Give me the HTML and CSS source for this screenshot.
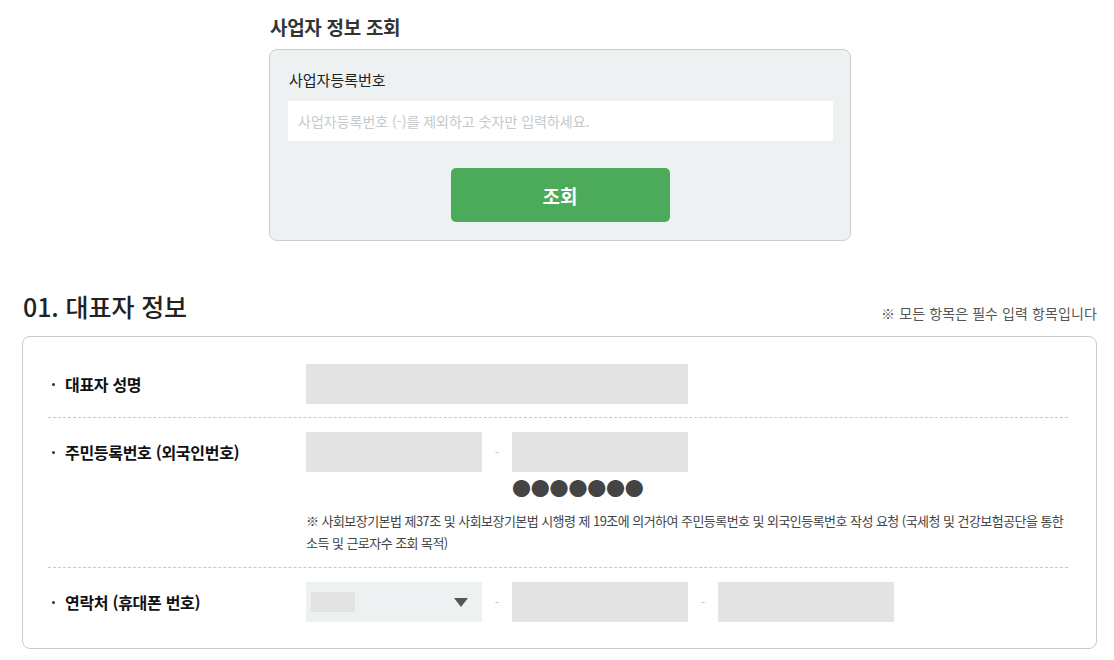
FILE: index.html
```html
<!DOCTYPE html>
<html lang="ko">
<head>
    <meta charset="utf-8">
    <title>사업자 정보 조회</title>
    <link rel="stylesheet" href="styles.css">
</head>
<body>
    <div class="page">
        <div class="lookup">
            <h2 class="lookup-title">사업자 정보 조회</h2>
            <div class="lookup-box">
                <label class="lookup-label" for="bizNo">사업자등록번호</label>
                <input class="lookup-input" id="bizNo" type="text" placeholder="사업자등록번호 (-)를 제외하고 숫자만 입력하세요.">
                <div class="lookup-btn-wrap">
                    <button class="lookup-btn" type="button">조회</button>
                </div>
            </div>
        </div>

        <div class="section-head">
            <h2 class="section-title">01. 대표자 정보</h2>
            <span class="section-note">※ 모든 항목은 필수 입력 항목입니다</span>
        </div>
        <div class="card">
            <div class="row">
                <div class="row-label">대표자 성명</div>
                <div class="row-field">
                    <input class="box box-wide" type="text">
                </div>
            </div>
            <div class="row">
                <div class="row-label">주민등록번호 (외국인번호)</div>
                <div class="row-field">
                    <div class="inline">
                        <input class="box" type="text">
                        <span class="dash">-</span>
                        <div class="masked">
                            <input class="box" type="text">
                            <div class="dots">●●●●●●●</div>
                        </div>
                    </div>
                    <p class="notice">※ 사회보장기본법 제37조 및 사회보장기본법 시행령 제 19조에 의거하여 주민등록번호 및 외국인등록번호 작성 요청 (국세청 및 건강보험공단을 통한<br>소득 및 근로자수 조회 목적)</p>
                </div>
            </div>
            <div class="row">
                <div class="row-label">연락처 (휴대폰 번호)</div>
                <div class="row-field">
                    <div class="inline">
                        <div class="select">
                            <span class="select-value"></span>
                            <span class="select-arrow"></span>
                        </div>
                        <span class="dash">-</span>
                        <input class="box" type="text">
                        <span class="dash">-</span>
                        <input class="box" type="text">
                    </div>
                </div>
            </div>
        </div>
    </div>
</body>
</html>
```

FILE: styles.css
```css
body {
    margin: 0;
    background-color: #fff;
    font-family: "Noto Sans CJK KR", "Noto Sans", sans-serif;
    color: #222;
}
.page {
    width: 1075px;
    margin-left: 22px;
}
.lookup {
    width: 582px;
    margin-left: 247px;
    padding-top: 13px;
}
.lookup-title {
    margin: 0 0 9px 1px;
    font-size: 19px;
    line-height: 27px;
    font-weight: 700;
    color: #333;
    letter-spacing: -0.3px;
}
.lookup-box {
    background-color: #eef1f2;
    border: 1px solid #cbcdd1;
    border-radius: 8px;
    padding: 18px 18px 18px 18px;
}
.lookup-label {
    display: block;
    font-size: 15px;
    line-height: 24px;
    margin: 0 0 9px 1px;
    color: #222;
}
.lookup-input {
    display: block;
    box-sizing: border-box;
    width: 545px;
    height: 40px;
    border: none;
    padding: 0 10px;
    font-family: inherit;
    font-size: 14px;
    background-color: #fff;
}
.lookup-input::placeholder {
    color: #c6c8ca;
}
.lookup-btn-wrap {
    text-align: center;
    margin-top: 27px;
}
.lookup-btn {
    width: 219px;
    height: 54px;
    border: none;
    border-radius: 5px;
    background-color: #4cab5b;
    color: #fff;
    font-family: inherit;
    font-size: 19px;
    font-weight: 700;
    cursor: pointer;
}
.section-head {
    display: flex;
    justify-content: space-between;
    align-items: flex-end;
    margin-top: 49px;
    margin-bottom: 14px;
}
.section-title {
    margin: 0 0 0 1px;
    font-size: 25px;
    font-weight: 500;
    line-height: 32px;
    color: #222;
    letter-spacing: -0.1px;
}
.section-note {
    font-size: 14px;
    color: #555;
    line-height: 18px;
    letter-spacing: 0.1px;
}
.card {
    border: 1px solid #c9cbd0;
    border-radius: 8px;
    padding: 27px 28px 26px 25px;
}
.row {
    display: flex;
    padding: 14px 0 13px;
    border-bottom: 1px dashed #c8c8c8;
}
.row:first-child {
    padding-top: 0;
}
.row:last-child {
    border-bottom: none;
    padding-bottom: 0;
}
.row-label {
    position: relative;
    width: 258px;
    flex: none;
    height: 40px;
    line-height: 40px;
    padding-left: 17px;
    box-sizing: border-box;
    font-size: 16px;
    font-weight: 700;
    letter-spacing: -0.3px;
    color: #111;
}
.row-label::before {
    content: "";
    position: absolute;
    left: 4px;
    top: 19px;
    width: 3px;
    height: 3px;
    border-radius: 50%;
    background-color: #333;
}
.row-field {
    flex: 1;
}
.box {
    display: block;
    box-sizing: border-box;
    width: 176px;
    height: 40px;
    border: none;
    background-color: #e3e3e3;
    margin: 0;
}
.box-wide {
    width: 382px;
}
.inline {
    display: flex;
    align-items: flex-start;
}
.dash {
    width: 30px;
    text-align: center;
    line-height: 40px;
    font-size: 13px;
    color: #c4c8cc;
}
.dots {
    font-size: 19px;
    line-height: 26px;
    color: #444;
    letter-spacing: -0.2px;
    margin-top: 3px;
}
.notice {
    margin: 9px 0 0;
    font-size: 13px;
    line-height: 22px;
    color: #444;
    letter-spacing: -0.55px;
    white-space: nowrap;
}
.select {
    position: relative;
    width: 176px;
    height: 40px;
    background-color: #eef1f2;
}
.select-value {
    position: absolute;
    left: 5px;
    top: 10px;
    width: 44px;
    height: 20px;
    background-color: #e3e3e3;
}
.select-arrow {
    position: absolute;
    right: 14px;
    top: 16px;
    width: 0;
    height: 0;
    border-left: 7px solid transparent;
    border-right: 7px solid transparent;
    border-top: 9px solid #555;
}
```
